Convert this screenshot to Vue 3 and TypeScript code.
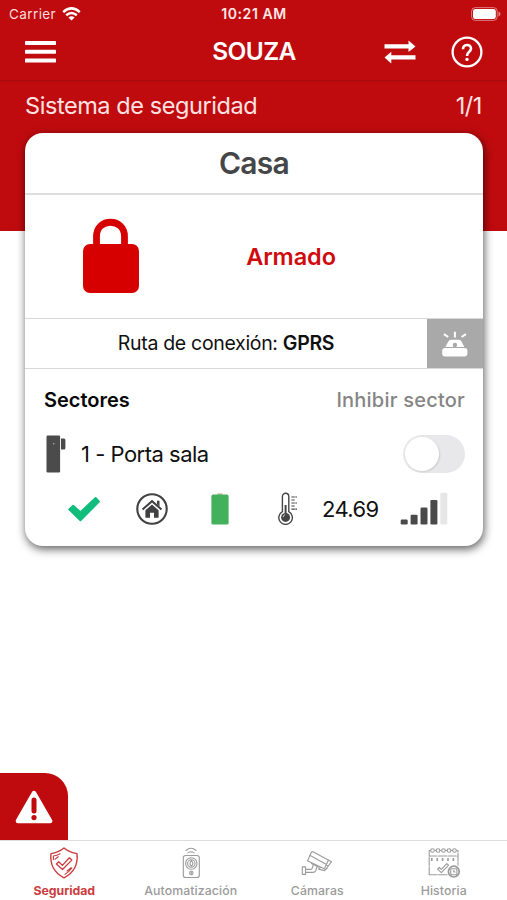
<script setup lang="ts">
import { ref } from 'vue'

interface Tab {
  id: string
  label: string
}

const tabs: Tab[] = [
  { id: 'security', label: 'Seguridad' },
  { id: 'automation', label: 'Automatización' },
  { id: 'cameras', label: 'Cámaras' },
  { id: 'history', label: 'Historia' },
]
const activeTab = ref('security')
const inhibited = ref(false)
</script>

<template>
  <main class="screen">
    <div class="hero">
      <div class="status">
        <div class="carrier">
          <span>Carrier</span>
          <svg width="19" height="14" viewBox="0 0 19 14" fill="none" stroke="#fff" stroke-width="2.5">
            <path d="M1.2 5.1Q9.5 -2.3 17.8 5.1M4.2 8.3Q9.5 3.7 14.8 8.3" />
            <path d="M9.5 13.6L6.4 10.6Q9.5 7.9 12.6 10.6Z" fill="#fff" stroke="none" />
          </svg>
        </div>
        <span class="clock">10:21 AM</span>
        <svg class="power" width="30" height="14" viewBox="0 0 30 14">
          <rect x=".6" y=".6" width="25.6" height="12.8" rx="3.6" fill="none" stroke="#fff" stroke-opacity=".45" />
          <rect x="2" y="2" width="22.8" height="10" rx="2.3" fill="#fff" />
          <path d="M27.5 4.5Q29.5 5.2 29.5 7T27.5 9.5Z" fill="#fff" fill-opacity=".5" />
        </svg>
      </div>
      <header class="nav">
        <button class="icon-button menu" aria-label="Menú">
          <svg width="31" height="22" viewBox="0 0 31 22" fill="#fff">
            <rect width="31" height="4" rx=".7" /><rect y="8.8" width="31" height="4" rx=".7" /><rect y="17.6" width="31" height="4" rx=".7" />
          </svg>
        </button>
        <h1>SOUZA</h1>
        <div class="actions">
          <button class="icon-button" aria-label="Cambiar">
            <svg width="32" height="24" viewBox="0 0 32 24" fill="#fff">
              <path d="M.5 4.2H24.5V.5L31.5 6.4L24.5 12V8.6H.5ZM31.5 15.2H7.3V11.7L.5 17.5L7.3 23.4V19.6H31.5Z" />
            </svg>
          </button>
          <button class="icon-button" aria-label="Ayuda">
            <svg width="32" height="32" viewBox="0 0 32 32" fill="none" stroke="#fff">
              <circle cx="16" cy="16" r="14.4" stroke-width="2.3" />
              <path d="M12 13.2C12 7.5 20 7.8 20 12.6C20 15.9 16 15.7 16 20" stroke-width="2.6" />
              <circle cx="16" cy="23.4" r="1.7" fill="#fff" stroke="none" />
            </svg>
          </button>
        </div>
      </header>
      <div class="heading">
        <span class="system">Sistema de seguridad</span>
        <span class="pages">1/1</span>
      </div>
    </div>

    <section class="card">
      <h2>Casa</h2>
      <div class="state">
        <svg class="lock" width="58" height="76" viewBox="0 0 58 76">
          <path d="M14.5 30V18.5C14.5 -.5 42.5 -.5 42.5 18.5V30" fill="none" stroke="#d60000" stroke-width="6.8" />
          <rect x="1" y="26" width="56" height="49" rx="7" fill="#d60000" />
        </svg>
        <strong>Armado</strong>
      </div>
      <div class="route">
        <p>Ruta de conexión: <b>GPRS</b></p>
        <button class="siren" aria-label="Sirena">
          <svg width="28" height="28" viewBox="0 0 28 28" fill="#fff">
            <rect x="1.2" y="17.9" width="25.2" height="8.6" rx="3" />
            <path d="M4.4 17L7.3 11.6Q8.2 9.8 10 9.8H17.8Q19.6 9.8 20.5 11.6L23.3 17Z" />
            <circle cx="13.9" cy="15" r="2.2" fill="#a9a9a9" />
            <path d="M13.9 1.8V7.4M2.9 4.2L7.2 7M20.6 7L24.9 4.2" stroke="#fff" stroke-width="2" />
          </svg>
        </button>
      </div>
      <div class="sectors">
        <div class="sector-head">
          <h3>Sectores</h3>
          <span>Inhibir sector</span>
        </div>
        <div class="sector">
          <svg width="20" height="38" viewBox="0 0 20 38">
            <rect x=".5" y=".5" width="13.6" height="37" rx="1.2" fill="#4b4b4b" />
            <path d="M15 3.5H18Q19.4 3.5 19.4 5V13Q19.4 14.5 18 14.5H15Z" fill="#4b4b4b" />
            <circle cx="7.8" cy="8.8" r=".8" fill="#b5b5b5" />
          </svg>
          <span class="name">1 - Porta sala</span>
          <button class="switch" :class="{ on: inhibited }" role="switch" :aria-checked="inhibited" aria-label="Inhibir sector" @click="inhibited = !inhibited"><i></i></button>
        </div>
        <div class="metrics">
          <svg width="34" height="26" viewBox="0 0 34 26">
            <path d="M2.2 13.4L6.2 9.8L13.4 16.3L28.6 2L32 5.6L13.4 24.3Z" fill="#10bd7d" stroke="#10bd7d" stroke-width="2" stroke-linejoin="round" />
          </svg>
          <svg class="home" width="32" height="32" viewBox="0 0 32 32">
            <circle cx="16" cy="16" r="14.7" fill="none" stroke="#414042" stroke-width="2.1" />
            <path d="M6.5 16.5L16 8.2L25.5 16.5" fill="none" stroke="#414042" stroke-width="2" />
            <path d="M21 7.7H23.5V13.5L21 11.3Z" fill="#414042" />
            <path d="M9.4 17.3L16 11.5L22.6 17.3V24.8H18V19.8H14V24.8H9.4Z" fill="#414042" />
          </svg>
          <svg class="battery" width="18" height="32" viewBox="0 0 18 32">
            <rect x="6.4" y=".3" width="5" height="2" fill="#c8bd9c" />
            <rect x=".4" y="1.6" width="17.2" height="30" rx="1.6" fill="#43b05c" />
          </svg>
          <svg class="thermo" width="20" height="33" viewBox="0 0 20 33" fill="none" stroke="#454545">
            <path d="M4.4 19.6V4.5A3.2 3.2 0 0 1 10.8 4.5V19.6A6.8 6.8 0 1 1 4.4 19.6Z" stroke-width="1.4" />
            <path d="M7.6 13V24" stroke-width="2" />
            <circle cx="7.6" cy="25.4" r="4.5" fill="#454545" stroke="none" />
            <path d="M5.1 25.2Q5.3 22.9 7.2 22.7" stroke="#ccc" />
            <path d="M13.4 5H19M13.4 8H16.7M13.4 11H19M13.4 14H16.7M13.4 17.2H19" stroke-width="1.2" stroke-dasharray="3.4 .5" />
          </svg>
          <span class="temperature">24.69</span>
          <svg class="signal" width="48" height="33" viewBox="0 0 48 33" fill="#4a4a4a">
            <rect x=".7" y="27.5" width="7" height="5" rx="1.2" />
            <rect x="10.6" y="22.8" width="7" height="9.7" rx="1.2" />
            <rect x="20.5" y="15.6" width="7" height="16.9" rx="1.2" />
            <rect x="30.4" y="8" width="7" height="24.5" rx="1.2" />
            <rect x="40.3" y=".7" width="7" height="31.8" rx="1.2" fill="#e7e7e7" />
          </svg>
        </div>
      </div>
    </section>

    <div class="spacer"></div>

    <button class="alert" aria-label="Alertas">
      <svg width="38" height="34" viewBox="0 0 38 34">
        <path d="M19 3.2L35 31H3Z" fill="#fff" stroke="#fff" stroke-width="4.6" stroke-linejoin="round" />
        <path d="M19 10V21" stroke="#c00b0e" stroke-width="5" stroke-linecap="round" />
        <circle cx="19" cy="27.6" r="2.6" fill="#c00b0e" />
      </svg>
    </button>

    <nav class="tabs">
      <button v-for="tab in tabs" :key="tab.id" class="tab" :class="[tab.id, { active: tab.id === activeTab }]" @click="activeTab = tab.id">
        <svg width="34" height="32" viewBox="0 0 34 32" fill="none" stroke="currentColor" stroke-width="1.1" stroke-linejoin="round" stroke-linecap="round">
          <template v-if="tab.id === 'security'">
            <path d="M17 1Q22.5 5.5 30 6.6Q31.8 23.2 17 30.8Q2.2 23.2 4 6.6Q11.5 5.5 17 1Z" stroke-width="1.4" />
            <path d="M6.4 12.5V9Q10 8.6 13 6.8M8 12.2L11.3 9.8M18 27.4Q22.2 24.7 24.8 21M20 24L24.2 20.8" />
            <path d="M9.4 17L11.7 14.8L15.4 18.4L22.3 10.8L24.8 13.1L15.5 22.5Z" stroke-width="1.3" />
          </template>
          <template v-else-if="tab.id === 'automation'">
            <path d="M12 3.5Q17 -1 22 3.5M14 5.9Q17 3.5 20 5.9" />
            <rect x="9.3" y="8.5" width="16" height="22" rx="2.3" />
            <circle cx="17.3" cy="16.5" r="5.7" /><circle cx="17.3" cy="16.5" r="3.7" />
            <path d="M17.3 13.5Q20.5 17 17.3 19.2Q14.7 17 17.3 13.5" />
            <circle cx="17.3" cy="26" r="1.7" /><path d="M17.3 25.2V26.8" />
          </template>
          <template v-else-if="tab.id === 'cameras'">
            <path d="M11.3 5.6Q12 4.2 13.5 4.9L31.5 14.7L25.7 22.5L7.5 13.7Z" />
            <path d="M10.2 8.5L28.2 18.5M28.4 13.2L24.8 20.8M20.7 20.4L18.5 22.2L24.5 23.6L27 21.4" />
            <path d="M13.6 17L12.1 21.4Q11.6 22.4 10.2 22.4H5.5M17.4 19L15.7 23.8Q15 25.4 13 25.4H5.5M2.3 19.9H5.5V27.4H2.3Z" />
            <path d="M11.4 16.4L19 20.2" />
          </template>
          <template v-else>
            <path d="M2.2 27.8V3.5H31V18M2.2 9H31M2.2 27.8H21" stroke-dasharray="8 1.3" />
            <path d="M4 12.6H29" stroke-width="3" stroke-dasharray="1.6 3.8" stroke-linecap="butt" />
            <g fill="#fff"><circle cx="5.5" cy="3.5" r="1.8" /><circle cx="11" cy="3.5" r="1.8" /><circle cx="16.5" cy="3.5" r="1.8" /><circle cx="22" cy="3.5" r="1.8" /><circle cx="27.5" cy="3.5" r="1.8" /></g>
            <path d="M10.5 22.2L12.3 20.5L14.3 22.4L19.8 16.6L21.6 18.2L14.4 25.7Z" />
            <circle cx="26.8" cy="24.6" r="5.4" fill="#fff" stroke-width="1.7" />
            <rect x="23.7" y="21.7" width="6.2" height="6" rx="1" /><path d="M26.8 23.2V25H28" />
          </template>
        </svg>
        <span>{{ tab.label }}</span>
      </button>
    </nav>
  </main>
</template>

<style>
body { margin: 0; background: #fff; }
</style>

<style scoped>
* { box-sizing: border-box; }
button { appearance: none; border: 0; padding: 0; background: none; font: inherit; color: inherit; }
svg { display: block; flex: none; }
h1, h2, h3, p { margin: 0; }
.screen { width: 507px; height: 900px; display: flex; flex-direction: column; font-family: Inter, "Liberation Sans", sans-serif; background: #fff; color: #101010; overflow: hidden; }
.hero { height: 231px; flex: none; background: #c00b0e; color: #fff; }
.status { height: 27px; display: grid; grid-template-columns: 1fr auto 1fr; align-items: center; padding: 0 6px 0 9px; font-size: 13.5px; }
.carrier { display: flex; align-items: center; gap: 6px; color: #ffdcdc; letter-spacing: .4px; }
.clock { font-weight: 600; font-size: 14px; letter-spacing: .6px; color: #ffe6e6; margin-right: 2px; }
.power { justify-self: end; }
.nav { height: 54px; display: grid; grid-template-columns: 1fr auto 1fr; align-items: center; padding: 0 24px 3px 25px; border-bottom: 1px solid #aa090c; box-shadow: 0 1px 1px rgb(120 0 0 / 15%); }
.nav h1 { font-size: 24.5px; line-height: 30px; font-weight: 600; letter-spacing: -.6px; transform: translateY(-1px); }
.actions { display: flex; justify-self: end; align-items: center; gap: 35px; }
.heading { display: flex; justify-content: space-between; padding: 10px 25px 0; font-size: 23.5px; line-height: 30px; letter-spacing: -.43px; color: #ffe3e3; }
.card { width: 458px; height: 413px; margin: -98px 0 0 25px; flex: none; position: relative; background: #fff; border-radius: 18px; box-shadow: 1px 3px 10px rgb(0 0 0 / 65%); overflow: hidden; }
.card h2 { height: 62px; border-bottom: 2px solid #dedede; text-align: center; font-size: 30px; line-height: 61px; font-weight: 600; letter-spacing: -.7px; color: #454648; }
.state { height: 123px; display: grid; grid-template-columns: 171px 1fr; align-items: center; padding-right: 97px; }
.state .lock { justify-self: center; margin-top: -1px; }
.state strong { color: #cf0b0e; font-size: 23.5px; font-weight: 600; letter-spacing: -.1px; text-align: center; }
.route { height: 51px; display: flex; border-top: 1.5px solid #d8d8d8; border-bottom: 1.5px solid #d8d8d8; }
.route p { flex: 1; text-align: center; font-size: 19.5px; line-height: 48px; letter-spacing: -.32px; }
.route b { font-weight: 600; }
.siren { width: 56px; background: #a9a9a9; display: grid; place-items: center; }
.sectors { padding: 17px 18px 0 19px; }
.sector-head { display: flex; justify-content: space-between; font-size: 20px; line-height: 28px; color: #858585; }
.sector-head span { font-weight: 500; letter-spacing: .22px; }
.sector-head h3 { font-size: inherit; font-weight: 600; color: #080808; }
.sector { display: flex; align-items: center; margin-top: 21px; height: 38px; padding-left: 2px; }
.name { margin-left: 15px; font-size: 22px; letter-spacing: -.5px; }
.switch { width: 62px; height: 38px; border-radius: 19px; background: #e8e8ea; margin-left: auto; padding: 2px; }
.switch i { display: block; width: 34px; height: 34px; border-radius: 50%; background: #fff; box-shadow: 1px 1px 2px rgb(0 0 0 / 12%); }
.switch.on i { margin-left: 24px; }
.metrics { display: flex; align-items: center; height: 34px; margin-top: 18.5px; padding-left: 23px; }
.home { margin-left: 35px; }
.battery { margin-left: 43px; }
.thermo { margin-left: 49px; }
.temperature { width: 58px; margin-left: 24px; font-size: 22px; letter-spacing: -.6px; }
.signal { margin-left: 20px; }
.spacer { flex: 1; }
.alert { width: 68px; height: 67px; flex: none; background: #c00b0e; border-top-right-radius: 23px; display: grid; place-items: center; }
.tabs { height: 60px; flex: none; display: grid; grid-template-columns: repeat(4, 1fr); padding-left: 1px; border-top: 1px solid #dcdcdc; }
.tab { display: flex; flex-direction: column; align-items: center; padding-top: 6px; color: #9b9b9b; font-size: 12.3px; line-height: 16px; font-weight: 500; letter-spacing: .1px; }
.tab span { margin-top: 4px; }
.tab.active { color: #cc3b3e; font-weight: 700; letter-spacing: -.05px; }
</style>
